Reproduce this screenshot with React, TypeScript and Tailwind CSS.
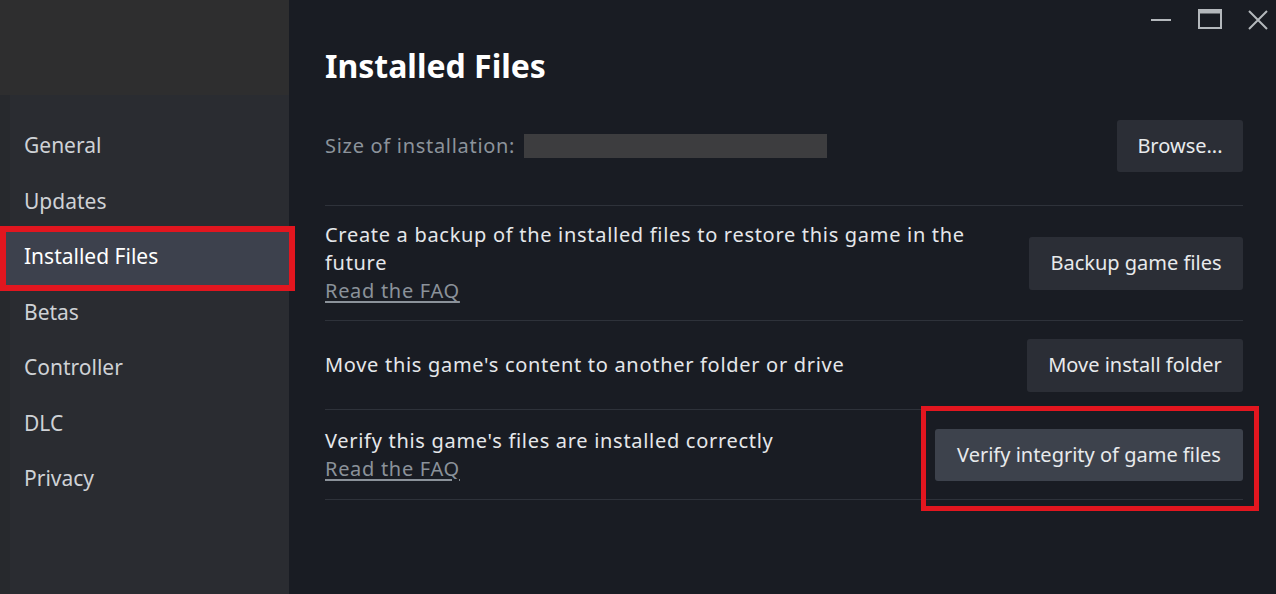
import React from "react";

const navItems = ["General", "Updates", "Installed Files", "Betas", "Controller", "DLC", "Privacy"];

function Btn({ children, className = "" }: { children: React.ReactNode; className?: string }) {
  return (
    <div
      className={`flex items-center justify-center rounded-[3px] text-[20px] text-[#e8eaec] ${className}`}
    >
      {children}
    </div>
  );
}

export default function App() {
  return (
    <div
      className="flex h-[594px] w-[1276px] overflow-hidden bg-[#191c23]"
      style={{ fontFamily: '"Noto Sans", "Open Sans", sans-serif' }}
    >
      {/* Sidebar */}
      <div className="flex w-[289px] shrink-0 flex-col bg-[#2a2c31] border-l-[10px] border-[#27292d]">
        <div className="-ml-[10px] h-[95px] bg-[#2e2e2f]" />
        <div className="-ml-[10px] pt-[23px]">
          {navItems.map((item) => {
            const active = item === "Installed Files";
            return (
              <div
                key={item}
                className={`relative flex h-[55.5px] items-center pl-[24px] text-[21px] ${
                  active ? "bg-[#3d414d] text-white" : "text-[#cfd2d6]"
                }`}
              >
                {item}
                {active && (
                  <span className="pointer-events-none absolute -top-[3px] -bottom-[6px] left-0 -right-[6px] border-[6px] border-[#e2161f]" />
                )}
              </div>
            );
          })}
        </div>
      </div>

      {/* Main */}
      <div className="relative flex flex-1 flex-col pl-[36px] pr-[33px] pt-[46px]">
        {/* Window controls */}
        <div className="absolute right-[8px] top-[8px] flex items-center gap-[26px] text-[#b4b8bc]">
          <svg width="22" height="22" viewBox="0 0 22 22">
            <line x1="1" y1="12" x2="21" y2="12" stroke="currentColor" strokeWidth="2" />
          </svg>
          <svg width="24" height="22" viewBox="0 0 24 22">
            <rect x="1" y="2" width="22" height="18" fill="none" stroke="currentColor" strokeWidth="2" />
            <line x1="1" y1="4" x2="23" y2="4" stroke="currentColor" strokeWidth="3" />
          </svg>
          <svg width="20" height="22" viewBox="0 0 20 22">
            <path d="M1 3 L19 21 M19 3 L1 21" stroke="currentColor" strokeWidth="2" fill="none" />
          </svg>
        </div>

        <div className="h-[40px] text-[32px] font-bold leading-[40px] text-white">Installed Files</div>

        {/* Size row */}
        <div className="flex h-[120px] items-center justify-between border-b border-[#2e323a]">
          <div className="flex items-center text-[20px] tracking-[0.7px] text-[#8c939b]">
            <span>Size of installation:</span>
            <span className="ml-[9px] h-[24px] w-[303px] bg-[#3d3d3f]" />
          </div>
          <Btn className="h-[52px] w-[126px] bg-[#2b2e36]">Browse...</Btn>
        </div>

        {/* Backup row */}
        <div className="flex h-[115px] items-center justify-between border-b border-[#2e323a]">
          <div className="w-[660px] text-[20px] leading-[28px] tracking-[0.7px] text-[#e5e7ea]">
            <div>Create a backup of the installed files to restore this game in the future</div>
            <div className="text-[#8b929a] underline underline-offset-[3px]">Read the FAQ</div>
          </div>
          <Btn className="h-[53px] w-[214px] bg-[#2b2e36]">Backup game files</Btn>
        </div>

        {/* Move row */}
        <div className="flex h-[89px] items-center justify-between border-b border-[#2e323a]">
          <div className="text-[20px] tracking-[0.7px] text-[#e5e7ea]">
            Move this game's content to another folder or drive
          </div>
          <Btn className="h-[53px] w-[216px] bg-[#2b2e36]">Move install folder</Btn>
        </div>

        {/* Verify row */}
        <div className="flex h-[90px] items-center justify-between border-b border-[#2e323a]">
          <div className="text-[20px] leading-[28px] tracking-[0.7px] text-[#e5e7ea]">
            <div>Verify this game's files are installed correctly</div>
            <div className="text-[#8b929a] underline underline-offset-[3px]">Read the FAQ</div>
          </div>
          <div className="relative">
            <span className="pointer-events-none absolute -left-[14px] -right-[16px] -top-[23px] -bottom-[30px] border-[5px] border-[#e2161f]" />
            <Btn className="relative h-[52px] w-[308px] bg-[#3d424c]">Verify integrity of game files</Btn>
          </div>
        </div>
      </div>
    </div>
  );
}
